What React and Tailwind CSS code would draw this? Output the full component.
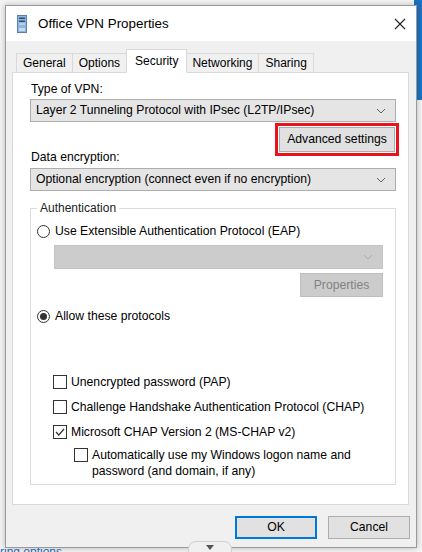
import React from 'react';

const font = { fontFamily: '"Segoe UI", "Liberation Sans", Arial, sans-serif' };

function Chevron({ color = '#606060' }) {
  return (
    <svg width="10" height="6" viewBox="0 0 10 6" className="shrink-0">
      <path d="M1 1 L5 5 L9 1" fill="none" stroke={color} strokeWidth="1" />
    </svg>
  );
}

function Combo({ text, className = '', disabled = false }) {
  return (
    <div
      className={`flex items-center justify-between pl-[5px] pr-[9px] border ${
        disabled ? 'bg-[#cccccc] border-[#c4c4c4]' : 'bg-[#e5e5e5] border-[#adadad]'
      } ${className}`}
    >
      <span className="text-[12.2px] leading-none">{text}</span>
      <Chevron color={disabled ? '#a8a8a8' : '#606060'} />
    </div>
  );
}

function Radio({ checked, label }) {
  return (
    <div className="flex items-center gap-[5px]">
      <span className="w-[13px] h-[13px] rounded-full border border-[#333] bg-white flex items-center justify-center">
        {checked && <span className="w-[7px] h-[7px] rounded-full bg-[#333]" />}
      </span>
      <span className="text-[12.2px] leading-[16px]">{label}</span>
    </div>
  );
}

function Check({ checked, children }) {
  return (
    <div className="flex items-start gap-[4px]">
      <span className="mt-[1px] w-[14px] h-[14px] shrink-0 border border-[#333] bg-white flex items-center justify-center">
        {checked && (
          <svg width="10" height="8" viewBox="0 0 10 8">
            <path d="M1 4 L3.8 7 L9 1" fill="none" stroke="#333" strokeWidth="1.2" />
          </svg>
        )}
      </span>
      <span className="text-[12.2px] leading-[16px]">{children}</span>
    </div>
  );
}

function Tab({ label, active }) {
  return (
    <div
      className={`border border-[#d9d9d9] px-[6px] text-[12px] ${
        active
          ? 'bg-white border-b-white h-[24px] leading-[22px] -mx-[1px] z-10 px-[8px]'
          : 'bg-[#f0f0f0] h-[20px] leading-[19px] -ml-px first:ml-0'
      }`}
    >
      {label}
    </div>
  );
}

export default function App() {
  return (
    <div className="relative w-[422px] h-[552px] overflow-hidden bg-[#f4f4f4] text-black" style={font}>
      {/* background window behind the dialog */}
      <div className="absolute right-0 top-0 w-[8px] h-[100px] bg-[#1c72c4]" />
      <div className="absolute left-0 top-[546px] text-[12px] text-[#2a6cc2] leading-none">ring options</div>

      <div className="relative pt-[5px] pl-[5px]">
        <div className="w-[412px] h-[543px] bg-[#f0f0f0] border border-[#9a9a9a] shadow-[0_0_6px_rgba(0,0,0,0.25)] flex flex-col">
          {/* title bar */}
          <div className="h-[35px] bg-white flex items-center pl-[11px] pr-[9px] shrink-0">
            <svg width="10" height="18" viewBox="0 0 10 18" className="mr-[11px]">
              <rect x="0.5" y="0.5" width="9" height="17" fill="#8fb6dc" stroke="#5b7fa8" />
              <rect x="2" y="2.5" width="6" height="1.5" fill="#2e4f75" />
              <rect x="2" y="5.5" width="6" height="1.5" fill="#2e4f75" />
              <rect x="2" y="8.5" width="6" height="1" fill="#dce9f5" />
              <rect x="2" y="13" width="6" height="3" fill="#c7dbef" />
            </svg>
            <span className="text-[13.4px] leading-none">Office VPN Properties</span>
            <svg width="12" height="12" viewBox="0 0 12 12" className="ml-auto mr-px">
              <path d="M1 1 L11 11 M11 1 L1 11" stroke="#222" strokeWidth="1.1" />
            </svg>
          </div>

          {/* tabs */}
          <div className="flex items-end pl-[10px] mt-[8px] h-[24px] relative z-10">
            <Tab label="General" />
            <Tab label="Options" />
            <Tab label="Security" active />
            <Tab label="Networking" />
            <Tab label="Sharing" />
          </div>

          {/* tab page */}
          <div className="ml-[6px] w-[397px] h-[433px] -mt-px bg-white border border-[#d9d9d9] pl-[17px] pr-[12px] flex flex-col">
            <div className="mt-[8px] text-[12.2px] leading-[16px] pl-px">Type of VPN:</div>
            <Combo className="mt-[2px] h-[23px]" text="Layer 2 Tunneling Protocol with IPsec (L2TP/IPsec)" />
            <div className="flex justify-end -mr-[3px] mt-[1px]">
              <div className="border-[3px] border-[#e8141b] p-px">
                <div className="w-[116px] h-[25px] bg-[#e1e1e1] border border-[#adadad] flex items-center justify-center text-[12.2px]">
                  Advanced settings
                </div>
              </div>
            </div>
            <div className="-mt-[7px] text-[12.2px] leading-[16px] pl-px">Data encryption:</div>
            <Combo className="mt-[3px] h-[23px]" text="Optional encryption (connect even if no encryption)" />

            <fieldset className="mt-[10px] h-[284px] border border-[#dcdcdc] pl-[6px] pr-[12px] flex flex-col">
              <legend className="px-[3px] text-[12px] leading-[14px] text-[#222]">Authentication</legend>
              <div className="mt-[8px]">
                <Radio label="Use Extensible Authentication Protocol (EAP)" />
              </div>
              <Combo disabled className="mt-[6px] ml-[17px] h-[24px]" text="" />
              <div className="flex justify-end mt-[4px]">
                <div className="w-[83px] h-[24px] bg-[#cccccc] border border-[#bfbfbf] flex items-center justify-center text-[12.2px] text-[#838383]">
                  Properties
                </div>
              </div>
              <div className="mt-[11px]">
                <Radio checked label="Allow these protocols" />
              </div>
              <div className="ml-[16px] mt-[50px] flex flex-col gap-[9px]">
                <Check>Unencrypted password (PAP)</Check>
                <Check>Challenge Handshake Authentication Protocol (CHAP)</Check>
                <Check checked>Microsoft CHAP Version 2 (MS-CHAP v2)</Check>
                <div className="ml-[21px] -mt-[2px]">
                  <Check>
                    Automatically use my Windows logon name and
                    <br />
                    password (and domain, if any)
                  </Check>
                </div>
              </div>
            </fieldset>
          </div>

          {/* buttons */}
          <div className="flex justify-end gap-[11px] pr-[6px] mt-[11px]">
            <div className="w-[82px] h-[23px] bg-[#e1e1e1] border-2 border-[#0078d7] flex items-center justify-center text-[12.2px]">OK</div>
            <div className="w-[82px] h-[23px] bg-[#e1e1e1] border border-[#adadad] flex items-center justify-center text-[12.2px]">Cancel</div>
          </div>
        </div>
      </div>

      {/* scroll hint tab at the bottom */}
      <div className="absolute left-[188px] top-[541px] w-[44px] h-[14px] bg-[#f0f0f0] rounded-t-[8px] border border-[#d0d0d0] flex justify-center pt-[3px]">
        <svg width="8" height="5" viewBox="0 0 8 5">
          <path d="M0 0 H8 L4 5 Z" fill="#555" />
        </svg>
      </div>
    </div>
  );
}
